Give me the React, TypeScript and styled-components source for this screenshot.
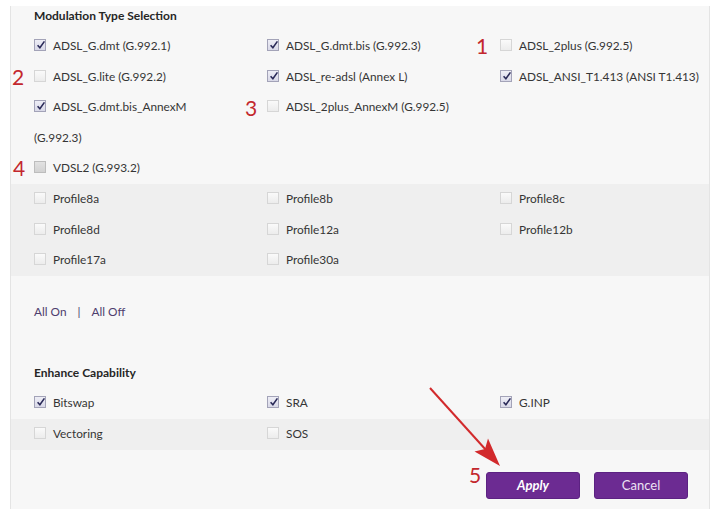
import React from 'react';
import styled, { createGlobalStyle } from 'styled-components';

const GlobalStyle = createGlobalStyle`
  html, body {
    margin: 0;
    padding: 0;
    background: #ffffff;
    overflow: hidden;
  }
  body {
    font-family: 'Lato', 'Liberation Sans', sans-serif;
    font-size: 11.8px;
    color: #353535;
  }
`;

const Page = styled.div`
  position: relative;
  width: 720px;
  height: 509px;
  overflow: hidden;
`;

const Panel = styled.div`
  margin-left: 10px;
  width: 698px;
  height: 530px;
  background: #f7f7f7;
  border-left: 1px solid #e4e4e4;
  border-right: 1px solid #e4e4e4;
`;

const SectionTitle = styled.div<{ $gap: number }>`
  padding-left: 23px;
  margin-top: ${({ $gap }) => $gap}px;
  line-height: 20px;
  font-size: 12px;
  font-weight: 700;
  color: #262626;
`;

const Spacer = styled.div<{ $h: number }>`
  height: ${({ $h }) => $h}px;
`;

const Row = styled.div<{ $shaded?: boolean }>`
  display: grid;
  grid-template-columns: 233px 233px 1fr;
  padding-left: 23px;
  background: ${({ $shaded }) => ($shaded ? '#efefef' : 'transparent')};
`;

const Item = styled.label`
  line-height: 30.6px;
  white-space: nowrap;
`;

const Box = styled.span<{ $on: boolean; $dim?: boolean }>`
  display: inline-block;
  position: relative;
  box-sizing: border-box;
  width: 12px;
  height: 12px;
  margin-right: 7px;
  vertical-align: -1px;
  border: 1px solid ${({ $on, $dim }) => ($on ? '#a3a3b8' : $dim ? '#bdbdbd' : '#d6d6d6')};
  background: ${({ $on, $dim }) =>
    $on
      ? 'linear-gradient(#eeeef6, #d9d9e8)'
      : $dim
        ? 'linear-gradient(#e2e2e2, #d2d2d2)'
        : 'linear-gradient(#fafafa, #ececec)'};

  svg {
    position: absolute;
    left: 1px;
    top: 0px;
  }
`;

const LinkRow = styled.div`
  display: flex;
  align-items: center;
  gap: 11px;
  margin-top: 21px;
  padding-left: 23px;
  line-height: 30.6px;
  color: #4e3e6e;
`;

const Sep = styled.span`
  color: #4e3e6e;
`;

const Buttons = styled.div`
  display: flex;
  justify-content: flex-end;
  gap: 14px;
  margin-top: 22px;
  padding-right: 21px;
`;

const Button = styled.button<{ $primary?: boolean }>`
  width: 94px;
  height: 27px;
  border: 1px solid #5c2282;
  border-radius: 3px;
  background: #6c2b92;
  color: ${({ $primary }) => ($primary ? '#ffffff' : '#ece2f3')};
  font-family: 'Lato', 'Liberation Sans', sans-serif;
  font-size: 13px;
  font-weight: ${({ $primary }) => ($primary ? 700 : 400)};
  font-style: ${({ $primary }) => ($primary ? 'italic' : 'normal')};
  cursor: pointer;
`;

const Marker = styled.span<{ $x: number; $y: number }>`
  position: absolute;
  left: ${({ $x }) => $x}px;
  top: ${({ $y }) => $y}px;
  font-family: 'Lato', 'Liberation Sans', sans-serif;
  font-size: 21px;
  line-height: 21px;
  color: #c3272d;
`;

const ArrowLayer = styled.svg`
  position: absolute;
  left: 0;
  top: 0;
  pointer-events: none;
`;

type Opt = { label: React.ReactNode; on: boolean; dim?: boolean };

const Check = ({ on, dim }: { on: boolean; dim?: boolean }) => (
  <Box $on={on} $dim={dim}>
    {on && (
      <svg width="10" height="10" viewBox="0 0 10 10">
        <path d="M1.6 5.2 L3.9 7.8 L8.4 1.4" fill="none" stroke="#2a2a58" strokeWidth="1.6" />
      </svg>
    )}
  </Box>
);

const Option = ({ opt }: { opt: Opt }) => (
  <Item>
    <Check on={opt.on} dim={opt.dim} />
    {opt.label}
  </Item>
);

const modulation: Opt[][] = [
  [
    { label: 'ADSL_G.dmt (G.992.1)', on: true },
    { label: 'ADSL_G.dmt.bis (G.992.3)', on: true },
    { label: 'ADSL_2plus (G.992.5)', on: false },
  ],
  [
    { label: 'ADSL_G.lite (G.992.2)', on: false },
    { label: 'ADSL_re-adsl (Annex L)', on: true },
    { label: 'ADSL_ANSI_T1.413 (ANSI T1.413)', on: true },
  ],
  [
    {
      label: (
        <>
          ADSL_G.dmt.bis_AnnexM
          <br />
          (G.992.3)
        </>
      ),
      on: true,
    },
    { label: 'ADSL_2plus_AnnexM (G.992.5)', on: false },
  ],
  [{ label: 'VDSL2 (G.993.2)', on: false, dim: true }],
];

const profiles: Opt[][] = [
  [
    { label: 'Profile8a', on: false },
    { label: 'Profile8b', on: false },
    { label: 'Profile8c', on: false },
  ],
  [
    { label: 'Profile8d', on: false },
    { label: 'Profile12a', on: false },
    { label: 'Profile12b', on: false },
  ],
  [
    { label: 'Profile17a', on: false },
    { label: 'Profile30a', on: false },
  ],
];

const enhance: { opts: Opt[]; shaded: boolean }[] = [
  {
    opts: [
      { label: 'Bitswap', on: true },
      { label: 'SRA', on: true },
      { label: 'G.INP', on: true },
    ],
    shaded: false,
  },
  {
    opts: [
      { label: 'Vectoring', on: false },
      { label: 'SOS', on: false },
    ],
    shaded: true,
  },
];

export default function App() {
  return (
    <>
      <GlobalStyle />
      <Page>
        <Panel>
          <SectionTitle $gap={6}>Modulation Type Selection</SectionTitle>
          <Spacer $h={5} />
          {modulation.map((row, i) => (
            <Row key={`m${i}`}>
              {row.map((opt, j) => (
                <Option key={j} opt={opt} />
              ))}
            </Row>
          ))}
          {profiles.map((row, i) => (
            <Row key={`p${i}`} $shaded>
              {row.map((opt, j) => (
                <Option key={j} opt={opt} />
              ))}
            </Row>
          ))}
          <LinkRow>
            <span>All On</span>
            <Sep>|</Sep>
            <span>All Off</span>
          </LinkRow>
          <SectionTitle $gap={36}>Enhance Capability</SectionTitle>
          <Spacer $h={5} />
          {enhance.map((row, i) => (
            <Row key={`e${i}`} $shaded={row.shaded}>
              {row.opts.map((opt, j) => (
                <Option key={j} opt={opt} />
              ))}
            </Row>
          ))}
          <Buttons>
            <Button $primary>Apply</Button>
            <Button>Cancel</Button>
          </Buttons>
        </Panel>

        <Marker $x={476} $y={35}>1</Marker>
        <Marker $x={12} $y={66}>2</Marker>
        <Marker $x={245} $y={97}>3</Marker>
        <Marker $x={13} $y={157}>4</Marker>
        <Marker $x={469} $y={464}>5</Marker>

        <ArrowLayer width="720" height="509" viewBox="0 0 720 509">
          <line x1="430" y1="388" x2="486" y2="450" stroke="#d22a2c" strokeWidth="2" />
          <polygon points="500,466 474.5,451.5 485,449 488,438.5" fill="#d22a2c" />
        </ArrowLayer>
      </Page>
    </>
  );
}
